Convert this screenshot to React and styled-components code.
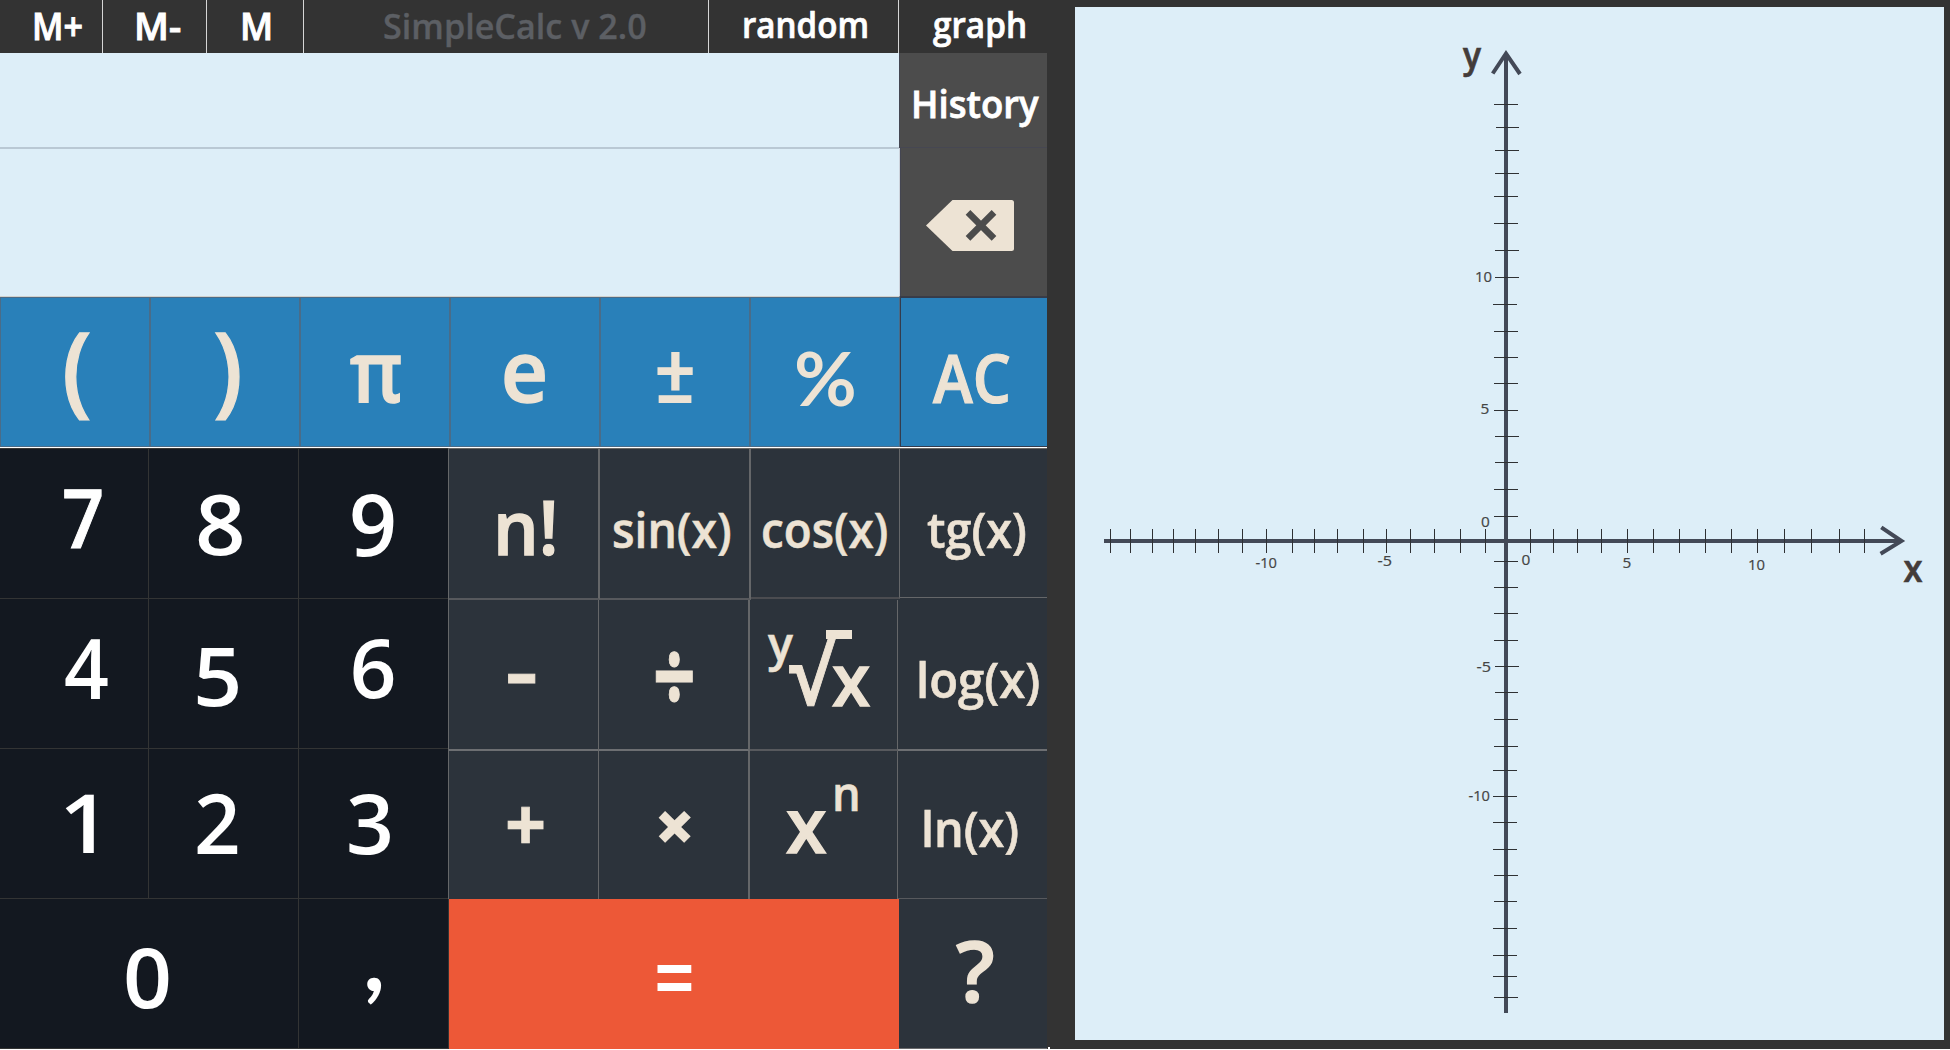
import React from "react";
import styled, { createGlobalStyle } from "styled-components";

const GlobalStyle = createGlobalStyle`
  * { box-sizing: border-box; }
  body {
    margin: 0;
    background: #fff;
    overflow: hidden;
    font-family: "Open Sans", "Noto Sans", sans-serif;
    font-weight: 600;
  }
`;

const sky = "#ddeef8";
const cream = "#ede3d4";
const charcoal = "#333333";
const line = "#656769";

const Page = styled.main`
  display: flex;
  width: 1950px;
  height: 1049px;
`;

const Calculator = styled.section`
  display: flex;
  flex-direction: column;
  flex: none;
  width: 1047px;
`;

const Row = styled.div`
  display: flex;
  flex: none;
`;

const Cell = styled.div`
  display: grid;
  grid-template: 100% / 100%;
  flex: none;
  width: ${(p) => p.$w}px;
  height: ${(p) => p.$h}px;
`;

const Glyph = styled.span`
  grid-area: 1 / 1;
  justify-self: start;
  align-self: start;
  margin: ${(p) => p.$y}px 0 0 ${(p) => p.$x}px;
  font-family: ${(p) => (p.$font ? `"${p.$font}", ` : "")}"Open Sans", sans-serif;
  font-size: ${(p) => p.$size}px;
  font-weight: ${(p) => p.$weight || 600};
  -webkit-text-stroke: ${(p) => p.$ink || 0}em currentColor;
  line-height: 1;
  white-space: pre;
  transform: scaleX(${(p) => p.$stretch || 1});
  transform-origin: 0 0;
`;

const Vinculum = styled.span`
  grid-area: 1 / 1;
  width: 26px;
  height: 9px;
  margin: 30px 0 0 76px;
  background: ${cream};
`;

const Tab = styled(Cell)`
  background: ${charcoal};
  color: ${(p) => (p.$muted ? "#5c5f64" : "#fff")};
  border-right: ${(p) => (p.$last ? 0 : 1)}px solid #d6d6d6;
`;

const Screen = styled.div`
  flex: none;
  width: 899px;
  background: ${sky};
`;

const Expression = styled.div`
  height: 96px;
  border-bottom: 2px solid #b9c8d4;
`;

const Result = styled.div`
  height: 148px;
  border-bottom: 1px solid #d2d1cc;
`;

const Side = styled.div`
  width: 148px;
`;

const HistoryKey = styled(Cell)`
  background: #4c4c4c;
  color: #fff;
  border-left: 1px solid #444652;
  border-bottom: 1px solid #464752;
`;

const EraseKey = styled(Cell)`
  background: #4c4c4c;
  border-left: 1px solid #ccd3dc;
  border-bottom: 1px solid #3b3c46;
  box-shadow: inset 1px 0 0 #444652;

  svg {
    display: block;
    margin: 51px 0 0 25px;
  }
`;

const BlueKey = styled(Cell)`
  background: #2980b9;
  color: ${cream};
  border: 1px solid ${(p) => (p.$last ? "#333c4d" : "#4a6c88")};
  border-right-width: ${(p) => (p.$last ? 0 : 1)}px;
`;

const Pad = styled.div`
  display: flex;
  margin-top: 1px;
  height: 451px;
`;

const Digits = styled.div`
  width: 448px;
  background: #131820;
`;

const DigitKey = styled(Cell)`
  background: #131820;
  color: #fff;
  border-top: ${(p) => (p.$first ? 1 : 0)}px solid #3a3835;
  border-right: ${(p) => (p.$open ? 0 : 1)}px solid #333434;
  border-bottom: 1px solid #333434;
`;

const Operators = styled.div`
  width: 599px;
  background: #2c333b;
  border-left: 1px solid ${line};
`;

const OperatorRow = styled(Row)`
  height: ${(p) => p.$h}px;
  border-top: ${(p) => (p.$first ? 1 : 0)}px solid #6b6864;
`;

const OperatorKey = styled(Cell)`
  color: ${cream};
  border-right: ${(p) => p.$right || 0}px solid ${line};
  border-bottom: ${(p) => p.$bottom || 0}px solid ${(p) => p.$edge || "#57595d"};
`;

const EqualsKey = styled(Cell)`
  background: #ed5837;
  color: #fff;
  border-left: 1px solid #333434;
`;

const HelpKey = styled(Cell)`
  background: #2c333b;
  color: ${cream};
  border-bottom: 1px solid #6b6b6d;
`;

const GraphFrame = styled.section`
  position: relative;
  flex: none;
  width: 903px;
  height: 1049px;
  padding: 7px 6px 9px 28px;
  background: ${charcoal};

  &::after {
    content: "";
    position: absolute;
    left: 1px;
    bottom: 0;
    width: 2px;
    height: 2px;
    background: #fff;
  }
`;

const Plot = styled.svg`
  display: block;
  background: ${sky};
`;

const AxisName = styled.text`
  fill: #433c3a;
  stroke: #433c3a;
  stroke-width: 0.7px;
  font-size: ${(p) => p.$size}px;
  font-weight: 600;
`;

const TickLabel = styled.text`
  fill: #444;
  stroke: #444;
  stroke-width: 0.2px;
  font-family: "Open Sans", sans-serif;
  font-size: 15px;
  font-weight: 400;
`;

const tabs = [
  { w: 103, label: "M+", x: 32, y: 6.6, size: 37.5, stretch: 0.91, ink: 0.025 },
  { w: 104, label: "M-", x: 31, y: 6.6, size: 37.5, stretch: 1.01, ink: 0.025 },
  { w: 97, label: "M", x: 32.7, y: 6.6, size: 37.5, stretch: 0.96, ink: 0.025 },
  { w: 405, label: "SimpleCalc v 2.0", x: 78.6, y: 9, size: 34.5, stretch: 0.99, ink: 0.01 },
  { w: 190, label: "random", x: 32.8, y: 6.5, size: 36, stretch: 0.92, ink: 0.02 },
  { w: 148, label: "graph", x: 33.5, y: 6.5, size: 36, stretch: 0.925, ink: 0.02 },
];

const blueKeys = [
  { label: "(", x: 61.2, y: 19.2, size: 98.9, stretch: 0.95, ink: 0.012 },
  { label: ")", x: 61.6, y: 19.2, size: 98.9, stretch: 0.95, ink: 0.012 },
  { label: "π", x: 48.6, y: 28.6, size: 85, stretch: 0.89, ink: 0.018 },
  { label: "e", x: 50.3, y: 28.9, size: 85, stretch: 0.96, ink: 0.018 },
  { label: "±", x: 52.9, y: 36.6, size: 81, stretch: 0.97, weight: 500, font: "Roboto" },
  { label: "%", x: 43.2, y: 42.6, size: 74.3, stretch: 1.03, weight: 700, font: "Lato" },
  { label: "AC", x: 32.3, y: 46, size: 67.5, stretch: 0.89, ink: 0.018 },
];

const digitRows = [
  [
    { label: "7", x: 62, y: 27.1, size: 81.9, stretch: 0.9, ink: 0.012 },
    { label: "8", x: 46.4, y: 31.8, size: 83.6, stretch: 1.06 },
    { label: "9", x: 49.7, y: 31.6, size: 84.9, stretch: 0.99 },
  ],
  [
    { label: "4", x: 64.2, y: 26.5, size: 82.6, stretch: 0.95 },
    { label: "5", x: 44.2, y: 34.6, size: 81.5, stretch: 1.06 },
    { label: "6", x: 50.7, y: 27.4, size: 81.8, stretch: 1 },
  ],
  [
    { label: "1", x: 58.7, y: 32.1, size: 81.9, stretch: 1.11 },
    { label: "2", x: 44.7, y: 30.8, size: 83.3, stretch: 0.98 },
    { label: "3", x: 46.7, y: 31.8, size: 82.4, stretch: 1.02 },
  ],
];
const digitWidths = [149, 150, 149];

const operatorRows = [
  {
    h: 152,
    keys: [
      { w: 151, h: 151, right: 2, bottom: 2, marks: [{ label: "n!", x: 43.6, y: 39.5, size: 75, stretch: 0.96, ink: 0.018 }] },
      { w: 151, h: 151, right: 2, bottom: 2, marks: [{ label: "sin(x)", x: 11.5, y: 56, size: 49.5, stretch: 0.935, ink: 0.012 }] },
      { w: 149, h: 150, right: 1, bottom: 2, edge: "#4b4c50", marks: [{ label: "cos(x)", x: 9.9, y: 56, size: 49.5, stretch: 0.925, ink: 0.012 }] },
      { w: 147, h: 149, bottom: 1, edge: line, marks: [{ label: "tg(x)", x: 26.5, y: 56, size: 49.5, stretch: 0.945, ink: 0.012 }] },
    ],
  },
  {
    h: 151,
    keys: [
      { w: 150, h: 151, right: 1, bottom: 2, edge: "#6d6f72", marks: [{ label: "-", x: 55.9, y: 22.7, size: 90, stretch: 1.15, ink: 0.01 }] },
      { w: 151, h: 151, right: 2, bottom: 2, edge: "#6d6f72", marks: [{ label: "÷", x: 53.5, y: 23, size: 102, stretch: 0.73, weight: 700, ink: 0.01 }] },
      {
        w: 148,
        h: 151,
        right: 1,
        bottom: 2,
        root: true,
        marks: [
          { label: "y", x: 18.2, y: 19.4, size: 47.4, stretch: 0.98, ink: 0.012 },
          { label: "√", x: 38, y: 26.5, size: 88.4, stretch: 0.93, ink: 0.01 },
          { label: "x", x: 81.8, y: 41.7, size: 72.2, stretch: 0.96, ink: 0.018 },
        ],
      },
      { w: 149, h: 151, bottom: 2, edge: "#6d6f72", marks: [{ label: "log(x)", x: 18.2, y: 55, size: 49.5, stretch: 0.955, ink: 0.012 }] },
    ],
  },
  {
    h: 148,
    keys: [
      { w: 150, h: 148, right: 1, marks: [{ label: "+", x: 56.1, y: 34.7, size: 73.5, stretch: 0.98, weight: 700, ink: 0.01 }] },
      { w: 151, h: 148, right: 2, marks: [{ label: "×", x: 54.7, y: 37.8, size: 71.7, stretch: 1, weight: 800 }] },
      {
        w: 148,
        h: 148,
        right: 1,
        marks: [
          { label: "x", x: 36.3, y: 35.4, size: 75.9, stretch: 0.97, ink: 0.018 },
          { label: "n", x: 81.8, y: 17.3, size: 49.1, stretch: 0.92, ink: 0.012 },
        ],
      },
      { w: 149, h: 148, bottom: 1, marks: [{ label: "ln(x)", x: 23.2, y: 53, size: 49.5, stretch: 0.945, ink: 0.012 }] },
    ],
  },
];

// [position, left end, right end]
const yTicks = [
  [104, 1494, 1518], [127, 1496, 1519], [150, 1495, 1519], [173, 1495, 1519], [196, 1494, 1518],
  [223, 1494, 1518], [250, 1495, 1519], [277, 1495, 1519], [304, 1493, 1517], [331, 1494, 1518],
  [357, 1494, 1518], [383, 1494, 1518], [410, 1494, 1518], [436, 1495, 1519], [462, 1495, 1518],
  [489, 1494, 1518], [516, 1494, 1518], [561, 1494, 1518], [587, 1494, 1518], [613, 1494, 1518],
  [640, 1494, 1518], [666, 1495, 1519], [692, 1495, 1518], [719, 1494, 1518], [746, 1494, 1518],
  [770, 1493, 1517], [796, 1493, 1517], [822, 1493, 1517], [849, 1493, 1517], [875, 1494, 1518],
  [901, 1494, 1517], [928, 1493, 1517], [955, 1493, 1517], [976, 1493, 1517], [997, 1494, 1518],
];
const xTicks = [
  1110, 1130, 1152, 1173, 1195, 1218, 1242, 1266, 1292, 1314, 1337, 1363, 1386, 1410, 1434, 1460, 1485,
  1530, 1553, 1577, 1601, 1627, 1653, 1679, 1705, 1731, 1757, 1784, 1811, 1839, 1864,
];
const tickLabels = [
  ["10", 1475, 282, 17], ["5", 1480.5, 414, 8.8], ["0", 1481, 527, 8.8],
  ["-5", 1476.5, 671.5, 14.5], ["-10", 1468.5, 801, 21.5],
  ["-10", 1255.5, 568, 21.5], ["-5", 1377.5, 566, 14.5], ["0", 1521.5, 565, 8.8],
  ["5", 1622.5, 568, 8.8], ["10", 1748, 570, 17],
];

function Mark({ label, x, y, size, stretch, weight, font, ink }) {
  return (
    <Glyph $x={x} $y={y} $size={size} $stretch={stretch} $weight={weight} $font={font} $ink={ink}>
      {label}
    </Glyph>
  );
}

function EraseIcon() {
  return (
    <svg width="90" height="53" viewBox="925 199 90 53">
      <path d="M926 225.5 L952.5 200 H1011.5 Q1014 200 1014 202.5 V248.5 Q1014 251 1011.5 251 H952.5 Z" fill={cream} />
      <path d="M968 212.3 L994 238.3 M994 212.3 L968 238.3" stroke="#4c4c4c" strokeWidth="6.6" />
    </svg>
  );
}

function Graph() {
  return (
    <Plot width="869" height="1033" viewBox="1075 7 869 1033">
      <g fill="none" stroke="#434957" strokeWidth="4">
        <path d="M1506 54 V1013 M1104 541 H1901" />
        <path d="M1492.7 73.5 L1506 53.5 L1520 74 M1881.3 527.3 L1901.5 541 L1880.6 553.7" />
      </g>
      <g stroke="#2f3134" strokeWidth="1">
        {yTicks.map(([y, a, b]) => (
          <line key={y} x1={a} x2={b} y1={y + 0.5} y2={y + 0.5} />
        ))}
        {xTicks.map((x) => (
          <line key={x} x1={x + 0.5} x2={x + 0.5} y1={529} y2={553} />
        ))}
      </g>
      {tickLabels.map(([t, x, y, len]) => (
        <TickLabel key={t + x} x={x} y={y} textLength={len} lengthAdjust="spacingAndGlyphs">
          {t}
        </TickLabel>
      ))}
      <AxisName x="1463" y="67.7" textLength="18" lengthAdjust="spacingAndGlyphs" $size={36}>y</AxisName>
      <AxisName x="1903.5" y="582" textLength="19" lengthAdjust="spacingAndGlyphs" $size={37}>x</AxisName>
    </Plot>
  );
}

export default function App() {
  return (
    <Page>
      <GlobalStyle />
      <Calculator>
        <Row>
          {tabs.map((t, i) => (
            <Tab key={t.label} $w={t.w} $h={53} $muted={i === 3} $last={i === tabs.length - 1}>
              <Mark {...t} />
            </Tab>
          ))}
        </Row>
        <Row>
          <Screen>
            <Expression />
            <Result />
          </Screen>
          <Side>
            <HistoryKey $w={148} $h={95}>
              <Mark label="History" x={10.7} y={30.8} size={38.7} stretch={0.945} ink={0.02} />
            </HistoryKey>
            <EraseKey $w={148} $h={149}>
              <EraseIcon />
            </EraseKey>
          </Side>
        </Row>
        <Row>
          {blueKeys.map((k, i) => (
            <BlueKey key={k.label} $w={i === 6 ? 147 : 150} $h={150} $last={i === 6}>
              <Mark {...k} />
            </BlueKey>
          ))}
        </Row>
        <Pad>
          <Digits>
            {digitRows.map((row, r) => (
              <Row key={r}>
                {row.map((k, i) => (
                  <DigitKey key={k.label} $w={digitWidths[i]} $h={r === 0 ? 151 : 150} $first={r === 0} $open={i === 2}>
                    <Mark {...k} />
                  </DigitKey>
                ))}
              </Row>
            ))}
          </Digits>
          <Operators>
            {operatorRows.map((row, r) => (
              <OperatorRow key={r} $h={row.h} $first={r === 0}>
                {row.keys.map((k, i) => (
                  <OperatorKey key={i} $w={k.w} $h={k.h} $right={k.right} $bottom={k.bottom} $edge={k.edge}>
                    {k.marks.map((m) => (
                      <Mark key={m.label} {...m} />
                    ))}
                    {k.root && <Vinculum />}
                  </OperatorKey>
                ))}
              </OperatorRow>
            ))}
          </Operators>
        </Pad>
        <Row>
          <DigitKey $w={299} $h={150}>
            <Mark label="0" x={122.6} y={36.3} size={82.4} stretch={1.04} />
          </DigitKey>
          <DigitKey $w={149} $h={150} $open>
            <Mark label="," x={64.3} y={9.9} size={93.3} stretch={1} weight={700} font="Lato" />
          </DigitKey>
          <EqualsKey $w={451} $h={150}>
            <Mark label="=" x={205.1} y={29.9} size={92.9} stretch={0.77} />
          </EqualsKey>
          <HelpKey $w={148} $h={150}>
            <Mark label="?" x={57.3} y={28.6} size={83.5} stretch={1.02} ink={0.018} />
          </HelpKey>
        </Row>
      </Calculator>
      <GraphFrame>
        <Graph />
      </GraphFrame>
    </Page>
  );
}
